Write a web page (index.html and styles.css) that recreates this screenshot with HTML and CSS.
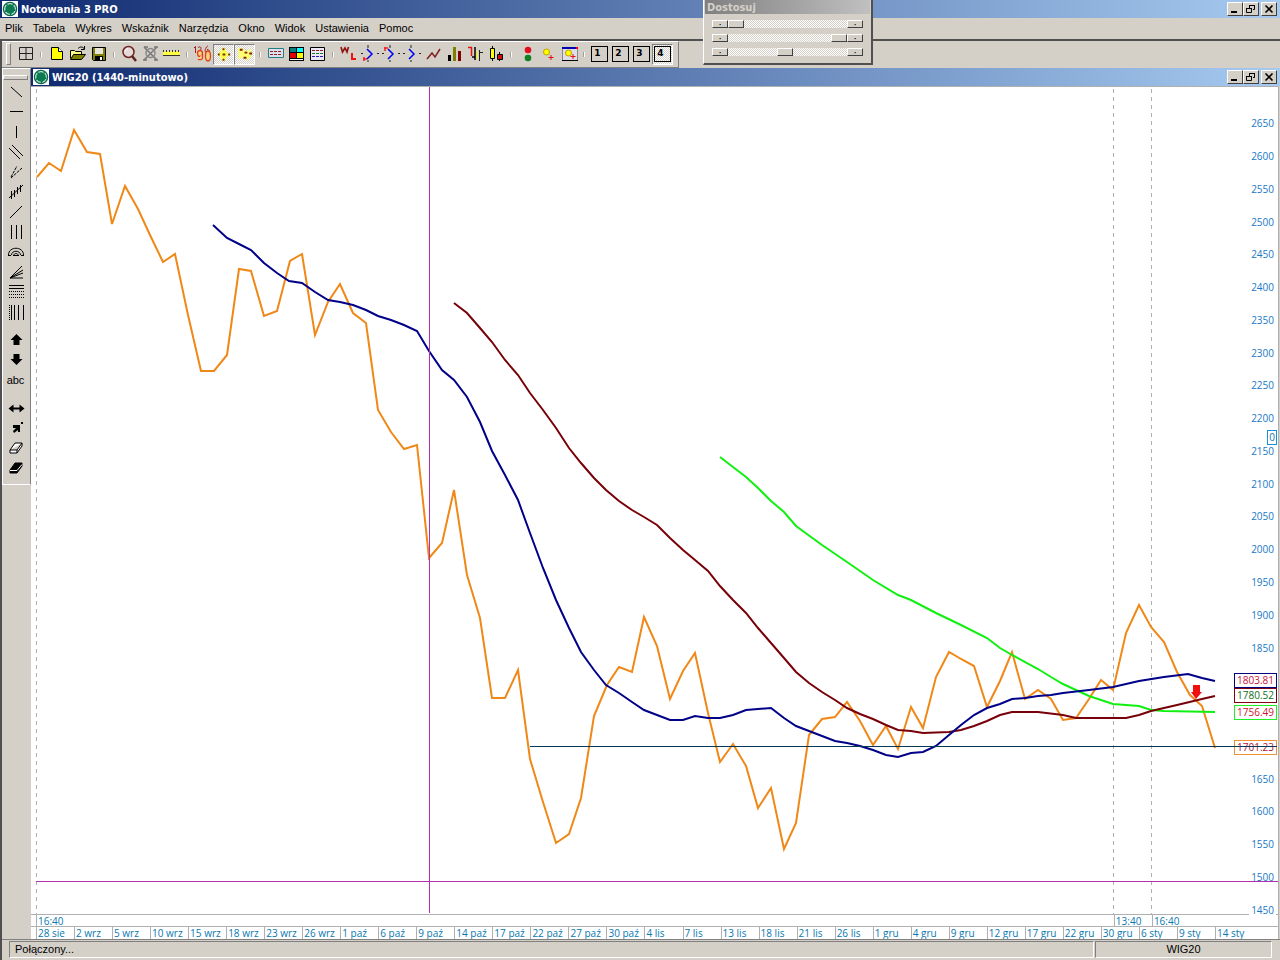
FILE: index.html
```html
<!DOCTYPE html>
<html lang="pl">
	<head>
		<meta charset="UTF-8"/>
		<title>Notowania 3 PRO</title>
		<link rel="stylesheet" href="styles.css">
	</head>
	<body>
		<svg class="defs" width="0" height="0" aria-hidden="true">
			<symbol id="logo" viewBox="0 0 16 16">
				<rect width="16" height="16" fill="#fff"/>
				<circle cx="8" cy="8" r="6.600" fill="#d0e8dc" stroke="#086848" stroke-width="1.300"/>
				<path d="M8 3l2.500 1 2 2 .5 3-1.500 2.500L9 13l-3.500-.8L3.300 9.500 3.500 6 5.500 4z" fill="#0c7a50"/>
				<path d="M4.500 3l1 2M11.500 3l-1 2M13.500 9.500l-2-.5M8.500 14v-2M3 10.500l2-1" stroke="#0c7a50" stroke-width="1.500"/>
			</symbol>
			<symbol id="min" viewBox="0 0 12 10"><path d="M2 8h6" stroke="#000" stroke-width="2"/></symbol>
			<symbol id="restore" viewBox="0 0 12 10"><path d="M4.500 4V1.500h5v4H8M4 1.500h6M1.500 4.500h5v4h-5zM1 4.500h6" fill="none" stroke="#000"/></symbol>
			<symbol id="close" viewBox="0 0 12 10"><path d="M2.500 1.500l7 7M9.500 1.500l-7 7" stroke="#000" stroke-width="1.600"/></symbol>
		</svg>

		<div class="app">
			<header class="titlebar">
				<svg class="logo"><use href="#logo"/></svg>
				<h1>Notowania 3 PRO</h1>
				<div class="controls">
					<button type="button" aria-label="Minimalizuj"><svg><use href="#min"/></svg></button>
					<button type="button" aria-label="Przywróć"><svg><use href="#restore"/></svg></button>
					<button type="button" class="close" aria-label="Zamknij"><svg><use href="#close"/></svg></button>
				</div>
			</header>

			<nav class="menu">
				<button type="button">Plik</button>
				<button type="button">Tabela</button>
				<button type="button">Wykres</button>
				<button type="button">Wskaźnik</button>
				<button type="button">Narzędzia</button>
				<button type="button">Okno</button>
				<button type="button">Widok</button>
				<button type="button">Ustawienia</button>
				<button type="button">Pomoc</button>
			</nav>

			<div class="frame">
				<div class="toolbar">
					<button type="button" aria-label="Siatka"><svg viewBox="0 0 20 20"><path d="M3.500 3.500h13v12h-13zM10 3.500v12M3.500 9.500h13" fill="none" stroke="#222"/></svg></button>
					<span class="sep"></span>
					<button type="button" aria-label="Nowy"><svg viewBox="0 0 20 20"><path d="M4.500 3.500h7l4 4v8h-11z" fill="#ff0" stroke="#000"/><path d="M11.500 3.500v4h4" fill="#fff" stroke="#000"/></svg></button>
					<button type="button" aria-label="Otwórz"><svg viewBox="0 0 20 20"><path d="M2.500 14.500v-8h4l1 1h6v3" fill="#ffff80" stroke="#000"/><path d="M2.500 15.500l3-5h12l-4 5z" fill="#808000" stroke="#000"/><path d="M10 4.500c2-2 4-2 6 0M16.500 2v3.500H13" fill="none" stroke="#000"/></svg></button>
					<button type="button" aria-label="Zapisz"><svg viewBox="0 0 20 20"><path d="M3.500 3.500h13v13h-12l-1-1z" fill="#808000" stroke="#000"/><path d="M6 4h8v6H6z" fill="#e8e4dc"/><path d="M6 12h8v5H6z" fill="#000"/><path d="M11 13h2v3h-2z" fill="#fff"/></svg></button>
					<span class="sep"></span>
					<button type="button" aria-label="Lupa"><svg viewBox="0 0 20 20"><circle cx="8.500" cy="8" r="5.500" fill="#e4d8d8" stroke="#702020" stroke-width="1.500"/><path d="M5 8c0-2 1-3 3-3" stroke="#fff" fill="none"/><path d="M12 12l4 5" stroke="#602020" stroke-width="2.500"/></svg></button>
					<button type="button" aria-label="Usuń powiększenie" disabled><svg viewBox="0 0 20 20"><path d="M3 3l13 13M16 3L3 16M3 3h4M13 3h4M2 16h4M13 16h4" stroke="#777" stroke-width="1.500"/><circle cx="9.500" cy="9" r="4.500" fill="none" stroke="#888" stroke-width="1.500"/></svg></button>
					<button type="button" aria-label="Linijka"><svg viewBox="0 0 20 20"><path d="M1 7.500h17v4H1z" fill="#ffff40"/><path d="M1 11.500h17" stroke="#333"/><path d="M1 7h17" stroke="#333" stroke-width="2" stroke-dasharray="1 2"/></svg></button>
					<span class="sep"></span>
					<button type="button" aria-label="Wartości"><svg viewBox="0 0 20 20"><g fill="none" stroke="#a02020"><path d="M1 4l1.500-1.500V9M5 3.500c3-2 4 1 2 3L5 9h4M15 2c-3 1-4 7-1 7s3-4 0-3.500"/></g><g fill="#ffd080" stroke="#e04010" stroke-width="1.300"><ellipse cx="7" cy="9.500" rx="2.500" ry="3"/><path d="M9.500 10v4c0 2-4 2-4.500 1"/><ellipse cx="15" cy="12" rx="2.500" ry="5"/></g></svg></button>
					<button type="button" class="pressed" aria-label="Krzyż"><svg viewBox="0 0 20 20"><path d="M10 3l3 3v2l4 2.500-4 2.500v2l-3 3-3-3v-2l-4-2.500L7 8V6z" fill="#ffff50"/><path d="M10 4v2M9 10.500h3M10 15v2M4 10.500h2M15 10.500h2" stroke="#703000" stroke-width="2"/></svg></button>
					<button type="button" class="pressed" aria-label="Znaczniki"><svg viewBox="0 0 20 20"><path d="M3 4h5l3 3 6-2v9l-5 2-4-2-5 1 1-4z" fill="#ffff70"/><path d="M5 5.500h3M10 8.500h3M15 9.500h3M9 14h3" stroke="#802000" stroke-width="2"/></svg></button>
					<span class="sep"></span>
					<button type="button" aria-label="Notowania"><svg viewBox="0 0 20 20"><path d="M2.500 4.500h15v9h-15z" fill="#dde" stroke="#208080"/><path d="M4 7.500h11M4 10.500h11" stroke="#902020" stroke-dasharray="3 1"/></svg></button>
					<button type="button" aria-label="Układ okien"><svg viewBox="0 0 20 20"><path d="M2 3h15v14H2z"/><path d="M3 4h6v4H3z" fill="#008080"/><path d="M10 4h6v4h-6z" fill="#0ff"/><path d="M3 9h6v5H3z" fill="#e00000"/><path d="M10 9h6v5h-6z" fill="#ff0"/><path d="M3 15h13v1H3z" fill="#fff"/></svg></button>
					<button type="button" aria-label="Lista"><svg viewBox="0 0 20 20"><path d="M2.500 3.500h14v13h-14z" fill="#eee8f4" stroke="#000"/><path d="M4 6.500h11" stroke="#802020" stroke-dasharray="3 1"/><path d="M4 9.500h11" stroke="#108020" stroke-dasharray="3 1"/><path d="M4 12.500h11" stroke="#2020c0" stroke-dasharray="3 1"/></svg></button>
					<span class="sep"></span>
					<button type="button" aria-label="WL"><svg viewBox="0 0 20 20"><path d="M2 3l1.500 5L6 4l2 4 1.500-5" fill="none" stroke="#901010" stroke-width="1.600"/><path d="M13 9v6h4" fill="none" stroke="#f01010" stroke-width="2"/></svg></button>
					<button type="button" aria-label="Fala w dół"><svg viewBox="0 0 20 20"><path d="M7 5l5 5-5 5" fill="none" stroke="#0000f0" stroke-width="1.500"/><path d="M8 1v3M8 16v2M1 9.500h2M17 9.500h2" stroke="#222"/><path d="M3 15h4M4 13v4" stroke="#f02020" stroke-width="1.500"/></svg></button>
					<button type="button" aria-label="Fala w górę"><svg viewBox="0 0 20 20"><path d="M7 5l5 5-5 5" fill="none" stroke="#0000f0" stroke-width="1.500"/><path d="M9 1v3M9 16v2M1 9.500h2M17 9.500h2" stroke="#222"/><path d="M3 4h4M4 3v4" stroke="#f02020" stroke-width="1.500"/></svg></button>
					<button type="button" aria-label="Fala"><svg viewBox="0 0 20 20"><path d="M7 5l5 5-5 5" fill="none" stroke="#0000f0" stroke-width="1.500"/><path d="M9 1v3M9 16v2M1 9.500h2M17 9.500h2" stroke="#222"/></svg></button>
					<button type="button" aria-label="Wykres liniowy"><svg viewBox="0 0 20 20"><path d="M4 15l5-6 3 4 5-8" fill="none" stroke="#802020" stroke-width="1.500"/></svg></button>
					<button type="button" aria-label="Wykres słupkowy"><svg viewBox="0 0 20 20"><path d="M4 11h3v6H4z"/><path d="M9 3h3v14H9z" fill="#808000"/><path d="M14 7h3v10h-3z" fill="#800000"/></svg></button>
					<button type="button" aria-label="Wykres OHLC"><svg viewBox="0 0 20 20"><path d="M3 3.500h4M6.500 3v9" stroke="#e01010" stroke-width="1.500"/><path d="M10 3v13M7 13h3" stroke="#000" stroke-width="1.500"/><path d="M12.500 7v8" stroke="#ff0"/><path d="M14.500 6v11M15 8.500h3" stroke="#222"/></svg></button>
					<button type="button" aria-label="Wykres świecowy"><svg viewBox="0 0 20 20"><path d="M6.500 2v15M13.500 8v9" stroke="#000"/><path d="M4.500 4.500h4v10h-4z" fill="#ff0" stroke="#000"/><path d="M11.500 10.500h5v5h-5z" fill="#d01010" stroke="#000"/></svg></button>
					<span class="sep"></span>
					<button type="button" aria-label="Sygnały"><svg viewBox="0 0 20 20"><circle cx="11" cy="6" r="3.300" fill="#e01020"/><circle cx="11" cy="14" r="3.300" fill="#108020"/></svg></button>
					<button type="button" aria-label="Dodaj alarm"><svg viewBox="0 0 20 20"><circle cx="8.500" cy="8" r="3" fill="#ff0" stroke="#c0a000"/><path d="M13 11v5M10.500 13.500h5" stroke="#e01010"/></svg></button>
					<button type="button" aria-label="Okno alarmów"><svg viewBox="0 0 20 20"><path d="M3.500 3.500h15v13h-15z" fill="#e0dce8" stroke="#888"/><path d="M3 4h16" stroke="#0000b0" stroke-width="2"/><path d="M17 4h2" stroke="#f00" stroke-width="2"/><path d="M3 16.500h16" stroke="#000"/><circle cx="9.500" cy="9" r="3" fill="#ff0" stroke="#c0a000"/><path d="M14 10v5M11.500 12.500h5" stroke="#e01010"/></svg></button>
					<span class="sep"></span>
					<button type="button" class="page"><span>1</span></button>
					<button type="button" class="page"><span>2</span></button>
					<button type="button" class="page"><span>3</span></button>
					<button type="button" class="page pressed"><span>4</span></button>
				</div>

				<div class="workspace">
					<aside class="tools">
						<button type="button" aria-label="Linia malejąca"><svg viewBox="0 0 20 20"><path d="M5 5l11 10"/></svg></button>
						<button type="button" aria-label="Linia pozioma"><svg viewBox="0 0 20 20"><path d="M4 9.500h13"/></svg></button>
						<button type="button" aria-label="Linia pionowa"><svg viewBox="0 0 20 20"><path d="M10.500 4v12"/></svg></button>
						<button type="button" aria-label="Kanał"><svg viewBox="0 0 20 20"><path d="M3 6l11 11M6 3l11 11"/></svg></button>
						<button type="button" aria-label="Widły"><svg viewBox="0 0 20 20"><path d="M5 16L16 6M5 15l6-11" stroke-dasharray="3 1"/></svg></button>
						<button type="button" aria-label="Cykl"><svg viewBox="0 0 20 20"><path d="M3 16L17 3M5.500 9v8M8.500 8v7M11.500 5v7M14.500 3v7"/></svg></button>
						<button type="button" aria-label="Linia rosnąca"><svg viewBox="0 0 20 20"><path d="M4 16L16 4"/></svg></button>
						<button type="button" aria-label="Linie czasu"><svg viewBox="0 0 20 20"><path d="M5.500 3v14M10.500 3v14M15.500 3v14"/></svg></button>
						<button type="button" aria-label="Łuki"><svg viewBox="0 0 20 20"><path d="M2.500 13c0-9 15-9 15 0M5.500 13c0-5 9-5 9 0M8 13c0-2 4-2 4 0M2 13.500h3M7 13.500h6M15 13.500h3"/></svg></button>
						<button type="button" aria-label="Wachlarz"><svg viewBox="0 0 20 20"><path d="M4 16L16 4M4 16l13-8M4 16l13-5M4 16h13"/></svg></button>
						<button type="button" aria-label="Zniesienia"><svg viewBox="0 0 20 20"><path d="M3 3.500h15M3 6.500h15"/><path d="M3 9.500h15M3 12.500h15M3 15.500h15" stroke-dasharray="1 1"/></svg></button>
						<button type="button" aria-label="Strefy czasowe"><svg viewBox="0 0 20 20"><path d="M3.500 3v15" stroke-dasharray="1 1"/><path d="M5.500 3v15M8.500 3v15M12.500 3v15M17.500 3v15"/></svg></button>
						<button type="button" class="spaced" aria-label="Strzałka w górę"><svg viewBox="0 0 20 20"><path class="solid" d="M10.500 4l6 6h-3v5h-6v-5h-3z"/></svg></button>
						<button type="button" aria-label="Strzałka w dół"><svg viewBox="0 0 20 20"><path class="solid" d="M10.500 15l6-6h-3V4h-6v5h-3z"/></svg></button>
						<button type="button" class="abc">abc</button>
						<button type="button" class="spaced" aria-label="Przesuń"><svg viewBox="0 0 20 20"><path class="solid" d="M2.500 10.500l5-4v3h6v-3l5 4-5 4v-3h-6v3z"/></svg></button>
						<button type="button" aria-label="Zaznacz"><svg viewBox="0 0 20 20"><path class="solid" d="M7 7h7v7h-2v-2l-4 3-1-2 3-3H7zM15 4h2v2h-2z"/></svg></button>
						<button type="button" aria-label="Gumka"><svg viewBox="0 0 20 20"><path d="M4 12l5-7h7v3l-5 7H4zM4 12h7l5-7M11 12v3" fill="#fff"/></svg></button>
						<button type="button" aria-label="Usuń wszystko"><svg viewBox="0 0 20 20"><path d="M4 12l5-7h7v3l-5 7H4z" fill="#000"/><path d="M4 12.500h7l5-6" stroke="#fff"/></svg></button>
					</aside>

					<main class="window">
						<div class="titlebar">
							<svg class="logo"><use href="#logo"/></svg>
							<h2>WIG20 (1440-minutowo)</h2>
							<div class="controls">
								<button type="button" aria-label="Minimalizuj"><svg><use href="#min"/></svg></button>
								<button type="button" aria-label="Przywróć"><svg><use href="#restore"/></svg></button>
								<button type="button" class="close" aria-label="Zamknij"><svg><use href="#close"/></svg></button>
							</div>
						</div>

						<div class="chart">
							<div class="plot">
								<svg class="lines" viewBox="31 87 1247 827" preserveAspectRatio="none" role="img" aria-label="Wykres WIG20">
									<path class="session" d="M36.500 89V914M1113.500 89V914M1151.500 89V914"/>
									<polyline class="price" points="37,177 49,163 61,171 74,130 87,152 100,154 112,224 125,186 138,209 150,235 163,262 175,254 188,315 201,371 214,371 227,355 239,269 251,271 264,316 277,311 290,261 302,254 315,335 328,302 340,284 353,313 366,323 378,410 391,432 404,449 417,445 429,558 442,543 454,490 467,575 480,618 492,698 505,698 518,670 530,759 543,802 556,843 569,834 581,798 594,716 607,685 619,667 632,672 644,617 657,646 670,699 683,671 695,653 708,713 720,762 733,744 746,766 758,808 771,788 784,849 796,823 809,735 822,719 835,717 847,702 860,721 873,745 886,726 898,749 911,707 923,728 936,677 949,652 961,659 974,666 987,707 1000,681 1012,652 1025,699 1038,690 1051,699 1063,720 1076,718 1089,699 1101,680 1113,690 1126,633 1139,605 1151,627 1164,642 1177,672 1190,695 1202,706 1215,748"/>
									<polyline class="slow" points="720,457 733,467 746,477 758,488 771,501 784,512 796,526 822,545 847,562 873,580 898,595 911,600 936,613 961,625 987,638 1000,648 1012,655 1038,669 1051,677 1063,684 1089,696 1113,704 1139,706 1151,710 1164,711 1215,712"/>
									<polyline class="medium" points="454,303 467,313 480,328 492,342 505,360 518,375 530,393 543,410 556,428 569,448 581,463 594,478 606,490 619,501 632,510 644,517 657,525 670,538 683,550 695,560 708,571 720,586 733,600 746,613 758,628 771,643 784,658 796,672 809,683 822,692 835,700 847,708 860,714 873,719 886,725 898,730 911,731 923,733 949,732 961,730 974,726 987,721 1000,715 1012,712 1038,712 1063,715 1076,718 1126,718 1139,715 1151,711 1177,705 1202,699 1215,696"/>
									<polyline class="fast" points="213,225 227,238 239,244 251,250 264,263 277,273 289,281 302,283 315,292 328,300 340,302 353,305 366,310 378,316 391,320 404,325 417,331 429,351 442,370 454,380 467,397 480,422 492,451 505,475 518,500 530,533 543,568 556,600 569,628 581,652 594,670 606,685 619,693 632,702 644,710 657,715 670,720 683,720 695,716 708,718 720,718 733,715 746,710 758,709 771,708 784,718 796,726 809,731 822,736 835,741 847,743 860,746 873,750 886,755 898,757 911,753 923,752 936,746 949,735 961,725 974,715 987,708 1000,704 1012,699 1025,698 1038,696 1051,695 1063,693 1089,690 1113,687 1139,681 1164,677 1188,674 1202,678 1215,681"/>
									<path class="arrow" d="M1193 685h7v7h2l-6 7-5-7h2z"/>
									<path class="cross" d="M36 881.500H1278"/>
									<rect class="cross-bar" x="429" y="87" width="1" height="826"/>
								</svg>
								<ol class="prices">
									<li>2650</li><li>2600</li><li>2550</li><li>2500</li><li>2450</li>
									<li>2400</li><li>2350</li><li>2300</li><li>2250</li><li>2200</li>
									<li>2150</li><li>2100</li><li>2050</li><li>2000</li><li>1950</li>
									<li>1900</li><li>1850</li><li></li><li></li><li></li>
									<li>1650</li><li>1600</li><li>1550</li><li>1500</li><li>1450</li>
								</ol>
								<span class="tag zero" style="top: 41.500%">0</span>
								<span class="tag navy" style="top: 70.900%">1803.81</span>
								<span class="tag maroon" style="top: 72.700%">1780.52</span>
								<span class="tag green" style="top: 74.700%">1756.49</span>
								<span class="tag orange" style="top: 79%">1701.23</span>
								<svg class="lines" viewBox="31 87 1247 827" preserveAspectRatio="none" aria-hidden="true">
									<path class="level" d="M530 746.500H1277"/>
								</svg>
							</div>
							<div class="times">
								<span>16:40</span><span>13:40</span><span>16:40</span>
							</div>
							<div class="dates">
								<span>28 sie</span><span>2 wrz</span><span>5 wrz</span><span>10 wrz</span><span>15 wrz</span><span>18 wrz</span><span>23 wrz</span><span>26 wrz</span>
								<span>1 paź</span><span>6 paź</span><span>9 paź</span><span>14 paź</span><span>17 paź</span><span>22 paź</span><span>27 paź</span><span>30 paź</span>
								<span>4 lis</span><span>7 lis</span><span>13 lis</span><span>18 lis</span><span>21 lis</span><span>26 lis</span>
								<span>1 gru</span><span>4 gru</span><span>9 gru</span><span>12 gru</span><span>17 gru</span><span>22 gru</span><span>30 gru</span>
								<span>6 sty</span><span>9 sty</span><span>14 sty</span>
							</div>
						</div>
					</main>
				</div>

				<footer class="status">
					<span class="state">Połączony...</span>
					<span class="symbol">WIG20</span>
				</footer>
			</div>

			<section class="adjust">
				<h2>Dostosuj</h2>
				<div class="slider">
					<button type="button" aria-label="Mniej">·</button>
					<input type="range" min="0" max="100" value="0" aria-label="Początek">
					<button type="button" aria-label="Więcej">·</button>
				</div>
				<div class="slider">
					<button type="button" aria-label="Mniej">·</button>
					<input type="range" min="0" max="100" value="100" aria-label="Koniec">
					<button type="button" aria-label="Więcej">·</button>
				</div>
				<div class="slider">
					<button type="button" aria-label="Mniej">·</button>
					<input type="range" min="0" max="100" value="48" aria-label="Skala">
					<button type="button" aria-label="Więcej">·</button>
				</div>
			</section>
		</div>
	</body>
</html>
```
FILE: styles.css
```css
* {
  box-sizing: border-box;
}

body {
  margin: 0;
  background: #d4d0c8;
  font-family: "Liberation Sans", Arial, sans-serif;
  font-size: 11px;
  color: #000;
}

button {
  padding: 0;
  border: 0;
  background: none;
  color: inherit;
  font: inherit;
}

h1, h2 {
  margin: 0;
  font-family: "DejaVu Sans Condensed", "DejaVu Sans", sans-serif;
  font-size: 11px;
  font-weight: bold;
}

.defs {
  position: absolute;
}

.app {
  position: relative;
  display: flex;
  flex-direction: column;
  height: 100vh;
  overflow: hidden;
}

/* title bars */
.titlebar {
  display: flex;
  flex: none;
  align-items: center;
  height: 18px;
  padding: 0 3px 0 2px;
  gap: 3px;
  background: linear-gradient(to right, #0f2a70, #a6caf0);
  color: #fff;
}

.logo {
  width: 16px;
  height: 16px;
}

.controls {
  display: flex;
  margin-left: auto;
}

.controls button {
  display: flex;
  width: 16px;
  height: 14px;
  padding: 1px;
  background: #d4d0c8;
  border: 1px solid;
  border-color: #fff #404040 #404040 #fff;
}

.controls .close {
  margin-left: 2px;
}

.controls svg {
  width: 12px;
  height: 10px;
}

/* menu */
.menu {
  display: flex;
  flex: none;
  height: 21px;
}

.menu button {
  padding: 0 5px 1px;
}

.frame {
  display: flex;
  flex: 1;
  flex-direction: column;
  min-height: 0;
  border-top: 2px solid #505050;
  border-left: 2px solid #505050;
}

/* toolbar */
.toolbar {
  display: flex;
  flex: none;
  align-items: center;
  align-self: flex-start;
  height: 27px;
  padding: 0 5px 1px 4px;
  border: solid;
  border-width: 1px 1px 1px 0;
  border-color: #fff #808080 #808080;
}

.toolbar::before {
  content: "";
  width: 3px;
  height: 20px;
  margin-right: 4px;
  border: 1px solid;
  border-color: #fff #808080 #808080 #fff;
}

.toolbar button {
  display: flex;
  align-items: center;
  justify-content: center;
  width: 21px;
  height: 21px;
}

.toolbar svg {
  width: 20px;
  height: 20px;
}

.sep {
  width: 2px;
  height: 5px;
  margin: 0 4px;
  border-left: 1px solid #a0a0a0;
  border-right: 1px solid #fff;
}

.toolbar .pressed,
.slider input {
  background: repeating-conic-gradient(#fff 0 25%, #d4d0c8 0 50%) 0 0 / 2px 2px;
}

.toolbar .pressed {
  border: 1px solid;
  border-color: #808080 #fff #fff #808080;
}

.page span {
  width: 17px;
  height: 16px;
  padding-right: 4px;
  border: 1px solid #000;
  font: bold 9px/12px "DejaVu Sans", sans-serif;
}

/* drawing tools */
.workspace {
  display: flex;
  flex: 1;
  min-height: 0;
}

.tools {
  display: flex;
  flex: none;
  flex-direction: column;
  align-items: center;
  align-self: flex-start;
  width: 29px;
  padding: 6px 2px 6px 0;
  border: 1px solid;
  border-color: #fff #808080 #fff #fff;
}

.tools::before {
  content: "";
  width: 23px;
  height: 3px;
  margin-bottom: 2px;
  border: 1px solid;
  border-color: #fff #808080 #808080 #fff;
}

.tools button {
  display: flex;
  justify-content: center;
  width: 20px;
  height: 20px;
}

.tools .spaced {
  margin-top: 8px;
}

.tools svg {
  width: 20px;
  height: 20px;
  fill: none;
  stroke: #000;
}

.tools .solid {
  fill: #000;
  stroke: none;
}

.tools .abc {
  align-items: center;
}

/* chart window */
.window {
  display: flex;
  flex: 1;
  flex-direction: column;
  min-width: 0;
}

.chart {
  display: flex;
  flex: 1;
  flex-direction: column;
  min-height: 0;
  margin-right: 1px;
  border: solid #b0b0b0;
  border-width: 1px 1px 0 0;
  background: #fff;
  color: #0878b0;
  font-family: "Open Sans", "Noto Sans", sans-serif;
  font-size: 10px;
}

.plot {
  position: relative;
  flex: 1;
  min-height: 0;
}

.lines {
  position: absolute;
  inset: 0;
  width: 100%;
  height: 100%;
  fill: none;
}

.lines * {
  vector-effect: non-scaling-stroke;
}

.session {
  stroke: #b0b0b0;
  stroke-dasharray: 4 4;
}

.price,
.fast,
.medium,
.slow {
  stroke-width: 2;
}

.price {
  stroke: #f08818;
}

.fast {
  stroke: #000088;
}

.medium {
  stroke: #780008;
}

.slow {
  stroke: #10f010;
}

.arrow {
  fill: #f01010;
}

.cross {
  stroke: #b030b0;
}

.cross-bar {
  fill: #b030b0;
  shape-rendering: crispEdges;
}

.level {
  stroke: #083858;
}

/* the scale runs a little below the plot, down to 1450 */
.prices {
  position: absolute;
  z-index: 1;
  top: 20px;
  right: 2px;
  bottom: -12px;
  display: grid;
  grid-auto-rows: 1fr;
  align-items: center;
  margin: 0;
  padding: 0;
  color: #1878c8;
  line-height: 12px;
  list-style: none;
}

.prices li {
  padding: 0 2px;
}

.prices li:last-child {
  background: #fff;
}

.tag {
  position: absolute;
  z-index: 1;
  right: 1px;
  width: 43px;
  height: 15px;
  border: 1px solid;
  background: #fff;
  line-height: 13px;
  text-align: center;
}

.tag + .lines {
  z-index: 2;
}

.zero {
  width: 10px;
  border-color: #1890d8;
}

.navy {
  border-color: #000080;
  color: #c81038;
}

.maroon {
  border-color: #800010;
  color: #107020;
}

.green {
  border-color: #20f020;
  color: #d01030;
}

.orange {
  border-color: #f09030;
  color: #b02030;
}

.times,
.dates {
  display: grid;
  flex: none;
  height: 12px;
  padding-left: 5px;
  border-top: 1px solid #b0b0b0;
  line-height: 12px;
  white-space: nowrap;
}

.times {
  grid-template-columns: 1077fr 38fr 126fr;
}

.dates {
  grid-template-columns: repeat(31, minmax(0, 38fr)) minmax(0, 63fr);
  height: 13px;
}

.times span,
.dates span {
  padding-left: 1px;
  border-left: 1px solid #b0b0b0;
}

/* status bar */
.status {
  display: flex;
  flex: none;
  gap: 1px;
  padding: 1px 8px 2px 7px;
  border-top: 1px solid #808080;
}

.status span {
  height: 17px;
  border: 1px solid;
  border-color: #808080 #fff #fff #808080;
  line-height: 14px;
}

.state {
  flex: 1;
  padding-left: 5px;
}

.symbol {
  width: 177px;
  text-align: center;
}

/* floating panel */
.adjust {
  position: absolute;
  z-index: 3;
  top: 0;
  left: 703px;
  display: flex;
  flex-direction: column;
  gap: 6px;
  width: 170px;
  height: 65px;
  background: #d4d0c8;
  border: solid;
  border-width: 0 2px 2px 1px;
  border-color: #fff #505050 #505050 #fff;
}

.adjust h2 {
  height: 14px;
  margin: 0 1px;
  padding-left: 2px;
  background: linear-gradient(to right, #808080, #c0c0c0);
  color: #d4d0c8;
  line-height: 15px;
}

.slider {
  display: flex;
  height: 8px;
  margin: 0 8px;
}

.slider button,
.slider input::-webkit-slider-thumb {
  width: 16px;
  height: 8px;
  background: #d4d0c8;
  border: 1px solid;
  border-color: #fff #404040 #404040 #fff;
  border-radius: 0;
}

.slider button {
  flex: none;
  line-height: 6px;
}

.slider input {
  flex: 1;
  min-width: 0;
  height: 8px;
  margin: 0;
  -webkit-appearance: none;
  appearance: none;
}

.slider input::-webkit-slider-thumb {
  -webkit-appearance: none;
  appearance: none;
}
```
